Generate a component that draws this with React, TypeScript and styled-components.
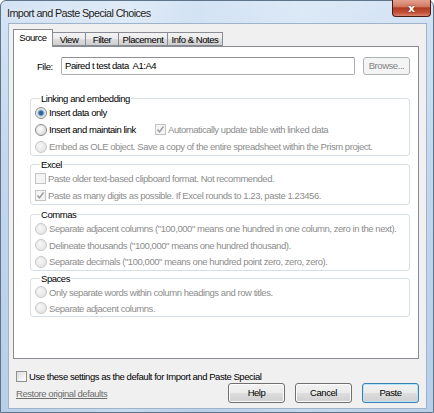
import React from 'react'
import styled, { createGlobalStyle, css } from 'styled-components'

const uiText = css`
    font-family: 'Liberation Sans', Arial, sans-serif;
    font-size: 9.5px;
    letter-spacing: -0.45px;
    white-space: nowrap;
`

const GlobalStyle = createGlobalStyle`
    html, body {
        margin: 0;
        padding: 0;
    }
    body {
        width: 434px;
        height: 413px;
        overflow: hidden;
        background: #ffffff;
        font-family: 'Liberation Sans', Arial, sans-serif;
    }
`

const Window = styled.div`
    width: 434px;
    height: 413px;
    box-sizing: border-box;
    display: flex;
    flex-direction: column;
    border: 1px solid #5f7389;
    border-radius: 6px 6px 0 0;
    background:
        linear-gradient(90deg, rgba(255,255,255,0) 0%, rgba(255,255,255,0.25) 30%, rgba(255,255,255,0) 45%, rgba(255,255,255,0.2) 70%, rgba(255,255,255,0) 100%),
        linear-gradient(180deg, #d4e4f5 0%, #c2d7ee 40%, #b7cfe9 100%);
`

const TitleBar = styled.div`
    height: 22px;
    display: flex;
    align-items: flex-start;
    justify-content: space-between;
    padding-left: 6px;
`

const Title = styled.span`
    font-size: 10.8px;
    letter-spacing: -0.6px;
    color: #1e1e1e;
    margin-top: 6px;
    text-shadow: 0 0 6px rgba(255, 255, 255, 0.9);
`

const CloseButton = styled.div`
    width: 39px;
    height: 17px;
    margin-right: 2px;
    margin-top: -1px;
    box-sizing: border-box;
    border: 1px solid #4a1b13;
    border-top: none;
    border-radius: 0 0 4px 4px;
    background: linear-gradient(180deg, #e4a08e 0%, #d47b66 40%, #b03a22 50%, #c4533a 80%, #d9866f 100%);
    display: flex;
    align-items: center;
    justify-content: center;
    color: #ffffff;
    font-family: 'DejaVu Sans', sans-serif;
    font-weight: bold;
    font-size: 11px;
    text-shadow: 0 0 2px #5a1a0e;
`

const Client = styled.div`
    flex: 1;
    margin: 0 6px 3px 7px;
    box-sizing: border-box;
    border: 1px solid #9fb4ca;
    background: #f0f0f0;
    padding: 5px 7px 0 4px;
    display: flex;
    flex-direction: column;
`

const TabRow = styled.div`
    height: 17px;
    display: flex;
    align-items: flex-end;
    position: relative;
    z-index: 1;
`

const Tab = styled.div<{ $active?: boolean; $w: number }>`
    ${uiText}
    width: ${p => p.$w}px;
    box-sizing: border-box;
    height: ${p => (p.$active ? 18 : 14)}px;
    margin-bottom: ${p => (p.$active ? -1 : 0)}px;
    border: 1px solid #898c95;
    border-bottom: ${p => (p.$active ? 'none' : '1px solid #898c95')};
    border-left: ${p => (p.$active ? '1px solid #898c95' : 'none')};
    background: ${p => (p.$active ? '#ffffff' : 'linear-gradient(180deg, #f3f3f3 0%, #ebebeb 50%, #dddddd 51%, #cfcfcf 100%)')};
    color: #000;
    text-align: center;
    line-height: ${p => (p.$active ? 16 : 13)}px;
    &:nth-child(2) {
        border-left: none;
    }
`

const Panel = styled.div`
    height: 313px;
    box-sizing: border-box;
    border: 1px solid #898c95;
    background: #ffffff;
    padding: 10px 0 0 16px;
    display: flex;
    flex-direction: column;
`

const FileRow = styled.div`
    display: flex;
    align-items: center;
    height: 18px;
    margin-left: 7px;
`

const Label = styled.span`
    ${uiText}
    width: 24px;
    color: #000;
`

const TextInput = styled.div`
    ${uiText}
    width: 294px;
    height: 18px;
    box-sizing: border-box;
    border: 1px solid #abadb3;
    border-top-color: #8e9099;
    border-radius: 2px;
    background: #fff;
    line-height: 15px;
    padding-left: 3px;
    white-space: pre;
    color: #000;
`

const SmallButton = styled.div`
    ${uiText}
    width: 47px;
    height: 18px;
    box-sizing: border-box;
    margin-left: 8px;
    border: 1px solid #adb2b5;
    border-radius: 3px;
    background: #f4f4f4;
    color: #838383;
    line-height: 16px;
    text-align: center;
`

const Group = styled.fieldset<{ $top: number }>`
    width: 380px;
    box-sizing: border-box;
    margin: ${p => p.$top}px 0 0 0;
    padding: 0 0 0 4px;
    border: 1px solid #d5dfe5;
    border-radius: 3px;
    min-width: 0;
`

const Legend = styled.legend`
    ${uiText}
    line-height: 11px;
    padding: 0 1px;
    margin-left: 5px;
    color: #000;
`

const Row = styled.div<{ $h?: number }>`
    height: ${p => p.$h ?? 17}px;
    display: flex;
    align-items: center;
`

const Option = styled.div<{ $w?: number; $disabled?: boolean }>`
    ${uiText}
    display: flex;
    align-items: center;
    width: ${p => (p.$w ? `${p.$w}px` : 'auto')};
    color: ${p => (p.$disabled ? '#8d8d8d' : '#000000')};
`

const Radio = styled.span<{ $checked?: boolean; $disabled?: boolean }>`
    width: 12px;
    height: 12px;
    box-sizing: border-box;
    border-radius: 50%;
    margin-right: 2px;
    flex-shrink: 0;
    border: 1px solid ${p => (p.$disabled ? '#c8c8c8' : '#8a8a8a')};
    background: ${p =>
        p.$checked
            ? 'radial-gradient(circle at 50% 50%, #2b5a8a 0, #3d6fa0 2px, #9cc0e0 3px, #e6e6e6 4px, #f6f6f6 6px)'
            : p.$disabled
            ? 'radial-gradient(circle at 40% 40%, #f8f8f8 0, #e8e8e8 5px)'
            : 'radial-gradient(circle at 40% 40%, #ffffff 0, #dcdcdc 6px)'};
`

const Check = styled.span<{ $disabled?: boolean }>`
    width: 11px;
    height: 11px;
    box-sizing: border-box;
    margin-right: 2px;
    flex-shrink: 0;
    border: 1px solid ${p => (p.$disabled ? '#c4c4c4' : '#8e8f8f')};
    background: ${p => (p.$disabled ? '#f4f4f4' : 'linear-gradient(135deg, #dcdcdc 0%, #ffffff 100%)')};
    display: flex;
    align-items: center;
    justify-content: center;
`

const Footer = styled.div`
    display: flex;
    flex-direction: column;
    margin-top: 11px;
    padding-left: 3px;
`

const FooterRow = styled.div`
    display: flex;
    align-items: center;
    justify-content: space-between;
`

const RestoreLink = styled.span`
    ${uiText}
    color: #6d6d6d;
    text-decoration: underline;
`

const Buttons = styled.div`
    display: flex;
    gap: 10px;
`

const Button = styled.div<{ $default?: boolean }>`
    ${uiText}
    width: 57px;
    height: 20px;
    box-sizing: border-box;
    border: 1px solid ${p => (p.$default ? '#3c7fb1' : '#707070')};
    border-radius: 3px;
    background: linear-gradient(180deg, #f2f2f2 0%, #ebebeb 48%, #dddddd 52%, #cfcfcf 100%);
    box-shadow: ${p => (p.$default ? 'inset 0 0 0 1px #b6e4f8' : 'inset 0 0 0 1px #fcfcfc')};
    line-height: 18px;
    text-align: center;
    color: #000;
`

const TickIcon = ({ color }: { color: string }) => (
    <svg width="9" height="9" viewBox="0 0 9 9">
        <path d="M1.5 4.5 L3.5 6.8 L7.5 1.5" fill="none" stroke={color} strokeWidth="1.4" />
    </svg>
)

const tabs = [
    { name: 'Source', w: 40 },
    { name: 'View', w: 33 },
    { name: 'Filter', w: 33 },
    { name: 'Placement', w: 49 },
    { name: 'Info & Notes', w: 55 },
]

const App = () => {
    return (
        <>
            <GlobalStyle />
            <Window>
                <TitleBar>
                    <Title>Import and Paste Special Choices</Title>
                    <CloseButton>x</CloseButton>
                </TitleBar>
                <Client>
                    <TabRow>
                        {tabs.map((t, i) => (
                            <Tab key={t.name} $w={t.w} $active={i === 0}>
                                {t.name}
                            </Tab>
                        ))}
                    </TabRow>
                    <Panel>
                        <FileRow>
                            <Label>File:</Label>
                            <TextInput>Paired t test data  A1:A4</TextInput>
                            <SmallButton>Browse...</SmallButton>
                        </FileRow>

                        <Group $top={18}>
                            <Legend>Linking and embedding</Legend>
                            <Row>
                                <Option>
                                    <Radio $checked />
                                    Insert data only
                                </Option>
                            </Row>
                            <Row>
                                <Option $w={120}>
                                    <Radio />
                                    Insert and maintain link
                                </Option>
                                <Option $disabled>
                                    <Check $disabled>
                                        <TickIcon color="#9a9a9a" />
                                    </Check>
                                    Automatically update table with linked data
                                </Option>
                            </Row>
                            <Row>
                                <Option $disabled>
                                    <Radio $disabled />
                                    Embed as OLE object. Save a copy of the entire spreadsheet within the Prism project.
                                </Option>
                            </Row>
                        </Group>

                        <Group $top={3}>
                            <Legend>Excel</Legend>
                            <Row>
                                <Option $disabled>
                                    <Check $disabled />
                                    Paste older text-based clipboard format. Not recommended.
                                </Option>
                            </Row>
                            <Row>
                                <Option $disabled>
                                    <Check $disabled>
                                        <TickIcon color="#9a9a9a" />
                                    </Check>
                                    Paste as many digits as possible. If Excel rounds to 1.23, paste 1.23456.
                                </Option>
                            </Row>
                        </Group>

                        <Group $top={4}>
                            <Legend>Commas</Legend>
                            <Row>
                                <Option $disabled>
                                    <Radio $disabled />
                                    Separate adjacent columns ("100,000" means one hundred in one column, zero in the next).
                                </Option>
                            </Row>
                            <Row $h={16}>
                                <Option $disabled>
                                    <Radio $disabled />
                                    Delineate thousands ("100,000" means one hundred thousand).
                                </Option>
                            </Row>
                            <Row>
                                <Option $disabled>
                                    <Radio $disabled />
                                    Separate decimals ("100,000" means one hundred point zero, zero, zero).
                                </Option>
                            </Row>
                        </Group>

                        <Group $top={2}>
                            <Legend>Spaces</Legend>
                            <Row $h={16}>
                                <Option $disabled>
                                    <Radio $disabled />
                                    Only separate words within column headings and row titles.
                                </Option>
                            </Row>
                            <Row $h={16}>
                                <Option $disabled>
                                    <Radio $disabled />
                                    Separate adjacent columns.
                                </Option>
                            </Row>
                        </Group>
                    </Panel>
                    <Footer>
                        <Row $h={13}>
                            <Option>
                                <Check />
                                Use these settings as the default for Import and Paste Special
                            </Option>
                        </Row>
                        <FooterRow>
                            <RestoreLink>Restore original defaults</RestoreLink>
                            <Buttons>
                                <Button>Help</Button>
                                <Button>Cancel</Button>
                                <Button $default>Paste</Button>
                            </Buttons>
                        </FooterRow>
                    </Footer>
                </Client>
            </Window>
        </>
    )
}

export default App
